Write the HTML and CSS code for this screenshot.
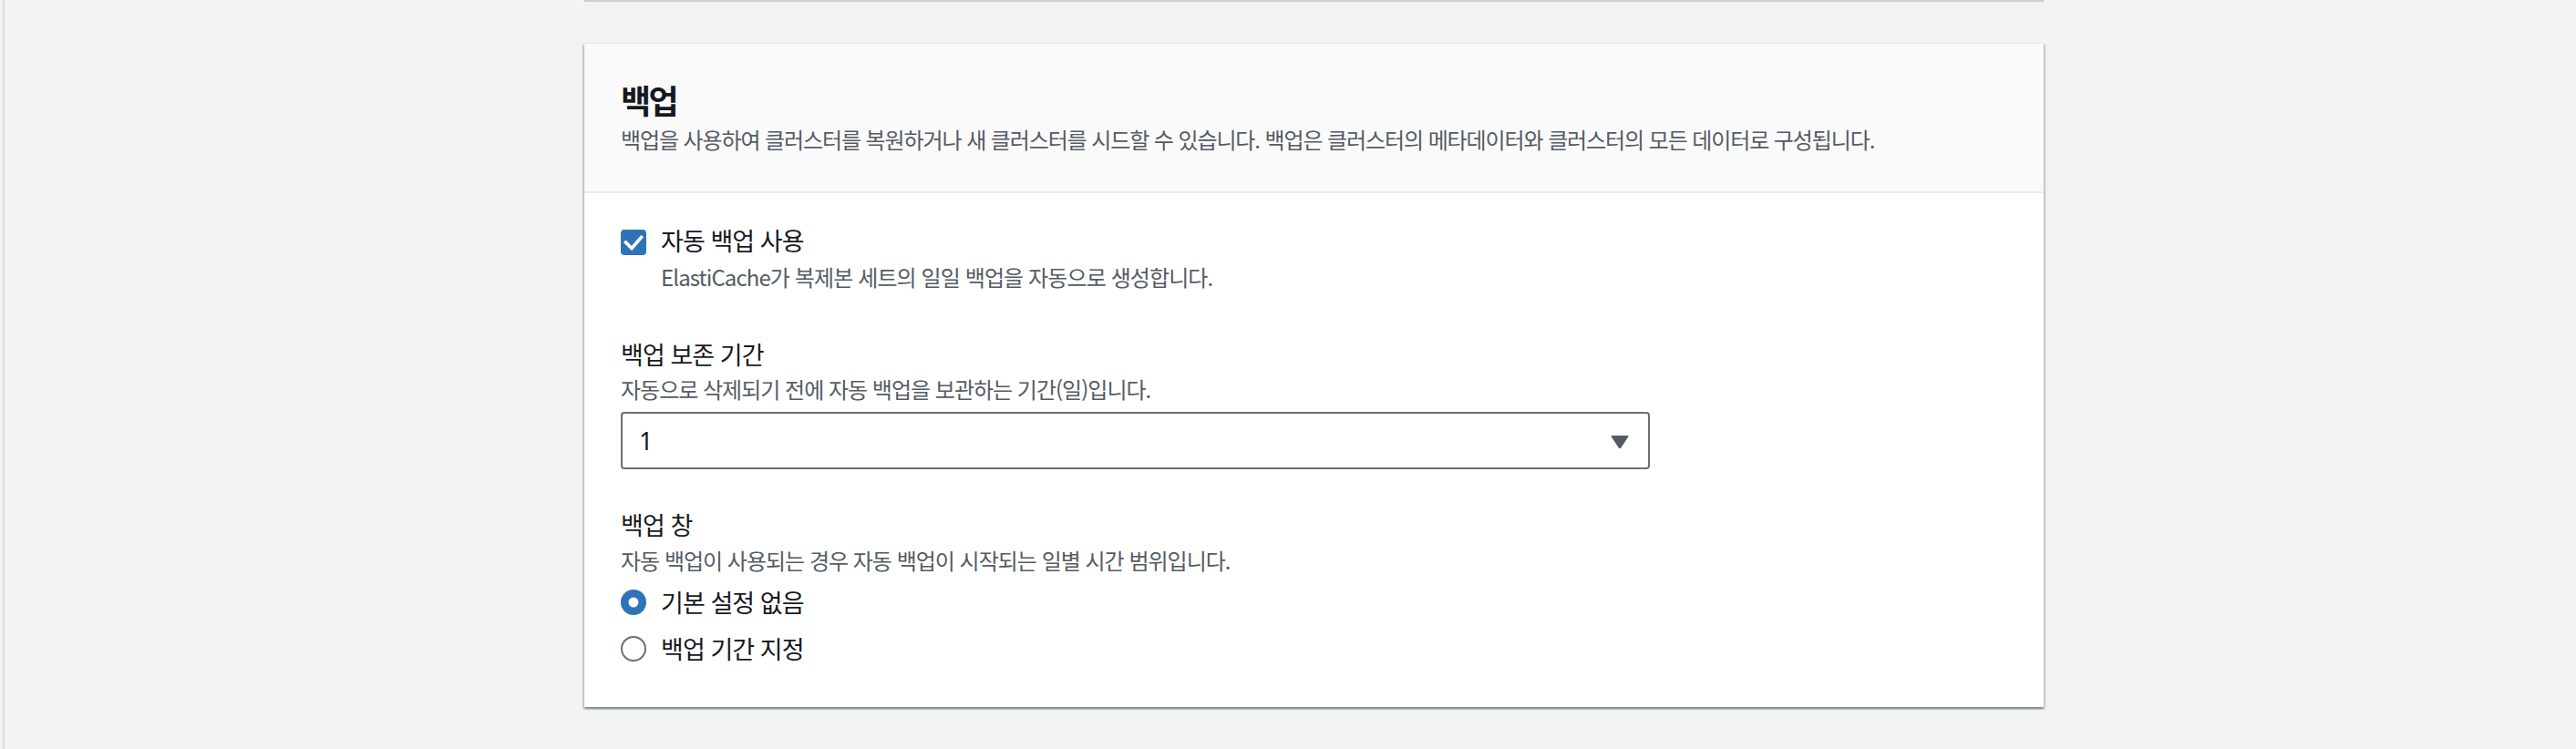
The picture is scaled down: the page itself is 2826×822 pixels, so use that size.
FILE: index.html
```html
<!DOCTYPE html>
<html lang="ko">
<head>
<meta charset="utf-8">
<title>백업</title>
<link rel="stylesheet" href="styles.css">
</head>
<body>
<div class="page">
  <div class="column">
    <div class="prev-card"></div>
    <section class="card">
      <header class="card-header">
        <h2 class="title">백업</h2>
        <p class="header-desc">백업을 사용하여 클러스터를 복원하거나 새 클러스터를 시드할 수 있습니다. 백업은 클러스터의 메타데이터와 클러스터의 모든 데이터로 구성됩니다.</p>
      </header>
      <div class="card-body">
        <div class="check-row">
          <svg class="control" width="28" height="28" viewBox="0 0 28 28">
            <rect x="0" y="0" width="28" height="28" rx="4" fill="#2e73b8"/>
            <polyline points="5.5,14 12,20.5 22.5,8.5" fill="none" stroke="#ffffff" stroke-width="3.6" stroke-linecap="square" stroke-linejoin="miter"/>
          </svg>
          <div class="check-text">
            <div class="label">자동 백업 사용</div>
            <div class="desc check-desc">ElastiCache가 복제본 세트의 일일 백업을 자동으로 생성합니다.</div>
          </div>
        </div>

        <div class="field retention">
          <div class="label">백업 보존 기간</div>
          <div class="desc">자동으로 삭제되기 전에 자동 백업을 보관하는 기간(일)입니다.</div>
          <div class="select">
            <span class="select-value">1</span>
            <svg class="caret" width="20" height="16" viewBox="0 0 20 16">
              <path d="M1.5 1 H18.5 Q20 1 19.2 2.4 L11.2 14.6 Q10 16 8.8 14.6 L0.8 2.4 Q0 1 1.5 1 Z" fill="#545b64"/>
            </svg>
          </div>
        </div>

        <div class="field window">
          <div class="label">백업 창</div>
          <div class="desc">자동 백업이 사용되는 경우 자동 백업이 시작되는 일별 시간 범위입니다.</div>
          <div class="radio-row first">
            <svg class="control" width="28" height="28" viewBox="0 0 28 28">
              <circle cx="14" cy="14" r="14" fill="#2e73b8"/>
              <circle cx="14" cy="14" r="5.5" fill="#ffffff"/>
            </svg>
            <span class="label">기본 설정 없음</span>
          </div>
          <div class="radio-row second">
            <svg class="control" width="28" height="28" viewBox="0 0 28 28">
              <circle cx="14" cy="14" r="13" fill="#ffffff" stroke="#687078" stroke-width="2"/>
            </svg>
            <span class="label">백업 기간 지정</span>
          </div>
        </div>
      </div>
    </section>
  </div>
</div>
</body>
</html>
```

FILE: styles.css
```css
html, body {
  margin: 0;
  padding: 0;
  background: #f2f3f3;
}

body {
  font-family: "Noto Sans CJK KR", "Noto Sans", sans-serif;
  color: #16191f;
}

.page {
  margin-left: 3px;
  border-left: 2px solid #dadddd;
  min-height: 822px;
  padding-left: 636px;
  box-sizing: border-box;
}

.column {
  width: 1601px;
}

.prev-card {
  height: 2px;
  background: #c9cecf;
}

.card {
  margin-top: 45px;
  background: #ffffff;
  border-top: 1px solid #e6e9e9;
  box-shadow: 0 2px 2px 0 rgba(0, 28, 36, 0.35),
              2px 2px 2px 0 rgba(0, 28, 36, 0.15),
              -2px 2px 2px 0 rgba(0, 28, 36, 0.15);
}

.card-header {
  background: #fafafa;
  padding: 39px 40px 41px 40px;
  border-bottom: 2px solid #eaeded;
}

.title {
  margin: 0;
  font-size: 36px;
  line-height: 44px;
  font-weight: 700;
  letter-spacing: -2.5px;
  color: #16191f;
}

.header-desc {
  margin: 6px 0 0 0;
  font-size: 24px;
  line-height: 32px;
  letter-spacing: -1.1px;
  color: #545b64;
}

.card-body {
  padding: 34px 40px 46px 40px;
}

.label {
  font-size: 27px;
  line-height: 36px;
  letter-spacing: -0.95px;
  color: #16191f;
}

.desc {
  font-size: 24px;
  line-height: 32px;
  letter-spacing: -1px;
  color: #545b64;
}

.check-row {
  display: flex;
  align-items: flex-start;
  gap: 16px;
}

.check-row .control {
  flex: none;
  margin-top: 6px;
}

.check-desc {
  margin-top: 6px;
  letter-spacing: -0.9px;
}

.field.retention {
  margin-top: 51px;
}

.field .desc {
  margin-top: 4px;
}

.select {
  margin-top: 9px;
  width: 1129px;
  height: 63px;
  box-sizing: border-box;
  border: 2px solid #687078;
  border-radius: 4px;
  display: flex;
  align-items: center;
  justify-content: space-between;
  padding: 0 21px 0 18px;
}

.select-value {
  font-family: "Noto Sans", sans-serif;
  font-size: 27px;
  color: #16191f;
}

.caret {
  flex: none;
  margin-top: 2px;
}

.field.window {
  margin-top: 43px;
}

.field.window .desc {
  margin-top: 5px;
}

.radio-row {
  display: flex;
  align-items: center;
  gap: 16px;
}

.radio-row .control {
  flex: none;
}

.radio-row.first {
  margin-top: 12px;
}

.radio-row.second {
  margin-top: 15px;
}
```
